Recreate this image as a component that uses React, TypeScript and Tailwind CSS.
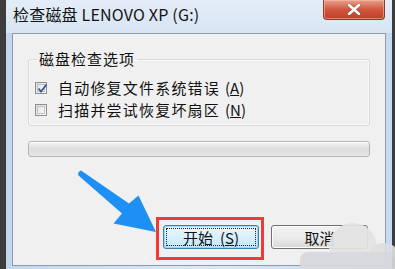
import React from "react";

const font = { fontFamily: '"Noto Sans CJK SC", "Noto Sans", sans-serif' };

function CheckBox({ checked }: { checked: boolean }) {
  return (
    <div className="w-[12px] h-[12px] border border-[#8e8f8f] bg-gradient-to-br from-[#dcdcdc] to-[#fbfbfb] p-[1px] shrink-0">
      <div className="w-full h-full border border-[#c0c4c8] bg-gradient-to-br from-[#e4e6e8] to-[#f8f8f8] relative">
        {checked && (
          <svg className="absolute -left-[1px] -top-[2px]" width="11" height="11" viewBox="0 0 11 11">
            <path d="M1.5 5.5 L4 8.5 L9.5 1.5" fill="none" stroke="#3b55a0" strokeWidth="1.8" />
          </svg>
        )}
      </div>
    </div>
  );
}

export default function App() {
  return (
    <div className="w-[395px] h-[269px] bg-[#3d3d3d] relative overflow-hidden" style={font}>
      <div className="ml-[6px] w-[386px] h-[269px] bg-gradient-to-r from-[#c2d7ee] via-[#dce8f5] to-[#c6daef] flex flex-col">
        {/* title bar */}
        <div className="h-[33px] flex items-start pl-[7px] pr-[6px] bg-gradient-to-b from-[#e4edf7] to-[#d7e5f3]">
          <div className="text-[16px] leading-[16px] mt-[6px] text-[#141414] tracking-[0.2px]">检查磁盘 LENOVO XP (G:)</div>
          <div className="ml-auto mr-[1px] w-[62px] h-[20px] rounded-b-[4px] border border-t-0 border-[#8b3b2c] bg-gradient-to-b from-[#e6a08e] via-[#d0573e] to-[#c13c25] flex items-center justify-center shadow-[inset_0_0_0_1px_rgba(255,200,180,0.5)]">
            <svg width="14" height="11" viewBox="0 0 14 11">
              <path d="M2 1 L12 10 M12 1 L2 10" stroke="#5a2a20" strokeWidth="4" strokeLinecap="round" opacity="0.35" />
              <path d="M2 1 L12 10 M12 1 L2 10" stroke="#ffffff" strokeWidth="2.6" strokeLinecap="round" />
            </svg>
          </div>
        </div>
        {/* content */}
        <div className="mx-[6px] mb-[3px] flex-1 border border-[#8d9cad] bg-[#f0f0f0] flex flex-col text-[#111]">
          <fieldset className="mx-[15px] mt-[17px] border border-[#d5d9dc] rounded-[3px] pb-[4px] shadow-[inset_0_0_0_1px_#fafafa]">
            <legend className="ml-[8px] px-[2px] text-[15px] leading-[16px] tracking-[1px]">磁盘检查选项</legend>
            <div className="mt-[10px] pl-[6px] flex flex-col">
              <div className="h-[22px] flex items-center gap-[11px] text-[15px] tracking-[1.2px]">
                <CheckBox checked />
                <span>
                  自动修复文件系统错误<span className="ml-[5px] tracking-[0px]">(<u>A</u>)</span>
                </span>
              </div>
              <div className="h-[22px] flex items-center gap-[11px] text-[15px] tracking-[1.2px]">
                <CheckBox checked={false} />
                <span>
                  扫描并尝试恢复坏扇区<span className="ml-[5px] tracking-[0px]">(<u>N</u>)</span>
                </span>
              </div>
            </div>
          </fieldset>
          <div className="mx-[15px] mt-[15px] h-[16px] rounded-[3px] border border-[#b5b5b5] bg-gradient-to-b from-[#f4f4f4] via-[#dcdcdc] to-[#e6e6e6] shadow-[inset_0_1px_0_#ffffff]" />
          <div className="mt-[68px] flex justify-end pr-[17px] gap-[12px]">
            <div className="relative">
              <div className="w-[96px] h-[24px] rounded-[3px] border border-[#3c7fb1] bg-gradient-to-b from-[#eaf6fd] via-[#d9f0fc] to-[#bee6fd] p-[2px] shadow-[inset_0_0_0_1px_#9fd6f5]">
                <div className="w-full h-full border border-dotted border-[#222] flex items-center justify-center text-[15px] leading-[15px]">
                  开始<span className="ml-[7px]">(<u>S</u>)</span>
                </div>
              </div>
              <div className="absolute -left-[7px] -top-[8px] w-[108px] h-[43px] border-[3px] border-[#f03a3a]" />
            </div>
            <div className="w-[97px] h-[24px] rounded-[3px] border border-[#707070] bg-gradient-to-b from-[#f2f2f2] via-[#ebebeb] to-[#d8d8d8] shadow-[inset_0_0_0_1px_#fcfcfc] flex items-center justify-center text-[15px] leading-[15px]">
              取消
            </div>
          </div>
        </div>
      </div>
      {/* annotation arrow */}
      <svg className="absolute left-0 top-0" width="395" height="269" viewBox="0 0 395 269">
        <path
          d="M81 170.5 L129 203.5 L138.5 195.5 L156 232 L113.5 223.5 L122 213.5 L78.5 175.5 Q77 172 81 170.5 Z"
          fill="#1d8ff5"
        />
        {/* watermark cloud */}
        <g opacity="0.92">
          <circle cx="353" cy="247" r="24" fill="#e4e4e4" />
          <circle cx="384" cy="260" r="17" fill="#dcdee0" />
          <rect x="300" y="252" width="95" height="20" rx="8" fill="#d7d9dc" />
        </g>
      </svg>
    </div>
  );
}
